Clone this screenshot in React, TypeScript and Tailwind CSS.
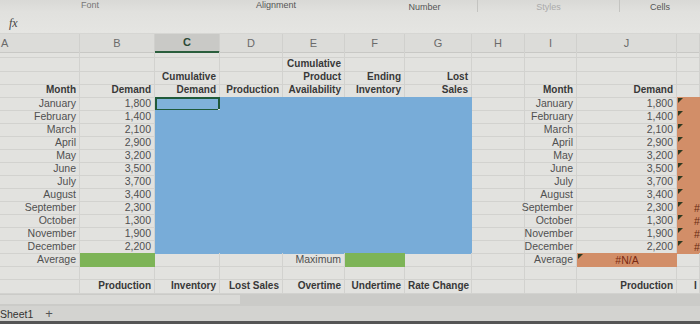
import React from "react";

const GRID =
  "grid grid-cols-[80px_75px_65px_63px_62px_60px_67px_53px_52px_100px_23px]";
const LINE = "border-r border-b border-[#d2d2cf]";
const HEAD = "font-bold text-[10px] text-[#383838]";
const DATA = "text-[10.5px] text-[#505050]";

type CellProps = {
  children?: React.ReactNode;
  cls?: string;
  align?: "right" | "left" | "center";
  line?: boolean;
};

function Cell({ children, cls = "", align = "right", line = true }: CellProps) {
  const j =
    align === "right"
      ? "justify-end"
      : align === "left"
      ? "justify-start"
      : "justify-center";
  return (
    <div
      className={`relative h-full flex items-end ${j} px-[3px] pb-[1px] leading-[12px] whitespace-nowrap ${
        line ? LINE : ""
      } ${cls}`}
    >
      {children}
    </div>
  );
}

const months: [string, string][] = [
  ["January", "1,800"],
  ["February", "1,400"],
  ["March", "2,100"],
  ["April", "2,900"],
  ["May", "3,200"],
  ["June", "3,500"],
  ["July", "3,700"],
  ["August", "3,400"],
  ["September", "2,300"],
  ["October", "1,300"],
  ["November", "1,900"],
  ["December", "2,200"],
];

function Tri() {
  return (
    <span className="absolute left-[1px] top-[1px] w-0 h-0 border-t-[5px] border-t-[#2f3a22] border-r-[5px] border-r-transparent" />
  );
}

export default function App() {
  return (
    <div
      className="w-[700px] h-[324px] overflow-hidden bg-[#e2e2df] flex flex-col"
      style={{ fontFamily: '"Liberation Sans", Arial, sans-serif' }}
    >
      {/* ribbon group labels */}
      <div className="h-[12px] flex bg-gradient-to-b from-[#d9d9d6] to-[#e1e1de] text-[9px] text-[#555] leading-[10px]">
        <div className="w-[180px] flex justify-center">
          <span className="mt-[0px] text-[#777]">Font</span>
        </div>
        <div className="w-[192px] flex justify-center">
          <span className="mt-[0px]">Alignment</span>
        </div>
        <div className="w-[106px] flex justify-center border-r border-[#c4c4c1]">
          <span className="mt-[2px]">Number</span>
        </div>
        <div className="w-[142px] flex justify-center border-r border-[#c4c4c1] text-[#aaa]">
          <span className="mt-[2px]">Styles</span>
        </div>
        <div className="flex-1 flex justify-center">
          <span className="mt-[2px]">Cells</span>
        </div>
      </div>
      {/* formula bar */}
      <div className="h-[22px] flex items-center pl-[9px] bg-gradient-to-b from-[#e1e1de] to-[#e5e5e2] border-b border-[#d6d6d3]">
        <span
          className="italic text-[12px] text-[#444]"
          style={{ fontFamily: '"Liberation Serif", serif' }}
        >
          fx
        </span>
      </div>
      {/* column headers */}
      <div className={`${GRID} h-[18px] bg-[#dcdcd9] text-[11px] text-[#6a6a6a]`}>
        {["A", "B", "C", "D", "E", "F", "G", "H", "I", "J", ""].map((l, i) => (
          <div
            key={i}
            className={`flex items-center ${
              i === 0 ? "justify-start pl-[1px]" : "justify-center"
            } ${
              i === 2
                ? "bg-[#c9c9c6] border-b-2 border-[#2b5e3d] text-[#2b4a35] font-bold"
                : "border-b border-[#c8c8c5]"
            } border-r border-r-[#d0d0cd]`}
          >
            {l}
          </div>
        ))}
      </div>
      {/* spacer row */}
      <div className={`${GRID} h-[6px]`}>
        {Array.from({ length: 11 }).map((_, i) => (
          <div key={i} className={LINE} />
        ))}
      </div>
      {/* header rows */}
      <div className={`${GRID} h-[13px] ${HEAD}`}>
        <Cell />
        <Cell />
        <Cell />
        <Cell />
        <Cell>Cumulative</Cell>
        <Cell />
        <Cell />
        <Cell />
        <Cell />
        <Cell />
        <Cell />
      </div>
      <div className={`${GRID} h-[13px] ${HEAD}`}>
        <Cell />
        <Cell />
        <Cell>Cumulative</Cell>
        <Cell />
        <Cell>Product</Cell>
        <Cell>Ending</Cell>
        <Cell>Lost</Cell>
        <Cell />
        <Cell />
        <Cell />
        <Cell />
      </div>
      <div className={`${GRID} h-[13px] ${HEAD}`}>
        <Cell>Month</Cell>
        <Cell>Demand</Cell>
        <Cell>Demand</Cell>
        <Cell>Production</Cell>
        <Cell>Availability</Cell>
        <Cell>Inventory</Cell>
        <Cell>Sales</Cell>
        <Cell />
        <Cell>Month</Cell>
        <Cell>Demand</Cell>
        <Cell />
      </div>
      {/* data rows */}
      {months.map(([m, v], r) => (
        <div key={m} className={`${GRID} h-[13px] ${DATA}`}>
          <Cell>{m}</Cell>
          <Cell>{v}</Cell>
          {[0, 1, 2, 3, 4].map((c) => (
            <Cell key={c} line={false} cls="bg-[#78acd8]">
              {r === 0 && c === 0 ? (
                <>
                  <span className="absolute left-0 top-0 right-0 bottom-0 border-2 border-[#1f5a3a] bg-[#80b2da]" />
                  <span className="absolute -right-[3px] -bottom-[3px] w-[5px] h-[5px] bg-[#1f5a3a] border border-[#e2e2df]" />
                </>
              ) : null}
            </Cell>
          ))}
          <Cell />
          <Cell>{m}</Cell>
          <Cell>{v}</Cell>
          <Cell line={false} cls="bg-[#d28e68] text-[#6a2a10]" align="left">
            <Tri />
            {r >= 8 ? <span className="ml-[14px]">#</span> : null}
          </Cell>
        </div>
      ))}
      {/* average row */}
      <div className={`${GRID} h-[14px] ${DATA}`}>
        <Cell>Average</Cell>
        <Cell line={false} cls="bg-[#7db457]" />
        <Cell />
        <Cell />
        <Cell>Maximum</Cell>
        <Cell line={false} cls="bg-[#7db457]" />
        <Cell />
        <Cell />
        <Cell>Average</Cell>
        <Cell line={false} cls="bg-[#d28e68] text-[#7a2a12]" align="center">
          <Tri />
          #N/A
        </Cell>
        <Cell />
      </div>
      {/* blank row */}
      <div className={`${GRID} h-[13px]`}>
        {Array.from({ length: 11 }).map((_, i) => (
          <Cell key={i} />
        ))}
      </div>
      {/* labels row */}
      <div className={`${GRID} h-[13px] ${HEAD}`}>
        <Cell />
        <Cell>Production</Cell>
        <Cell>Inventory</Cell>
        <Cell>Lost Sales</Cell>
        <Cell>Overtime</Cell>
        <Cell>Undertime</Cell>
        <Cell align="left">Rate Change</Cell>
        <Cell />
        <Cell />
        <Cell>Production</Cell>
        <Cell align="left">
          <span className="ml-[14px]">I</span>
        </Cell>
      </div>
      {/* horizontal scroll area */}
      <div className="h-[13px] bg-[#cbcbc8] flex items-center">
        <div className="w-[240px] h-[9px] bg-[#dadad7]" />
      </div>
      {/* sheet tabs */}
      <div className="h-[15px] bg-[#d3d3d0] flex items-center text-[10.5px] text-[#333] leading-[12px]">
        <span>Sheet1</span>
        <span className="ml-[12px] text-[13px] text-[#555]">+</span>
      </div>
      <div className="h-[3px] bg-[#555]" />
    </div>
  );
}
